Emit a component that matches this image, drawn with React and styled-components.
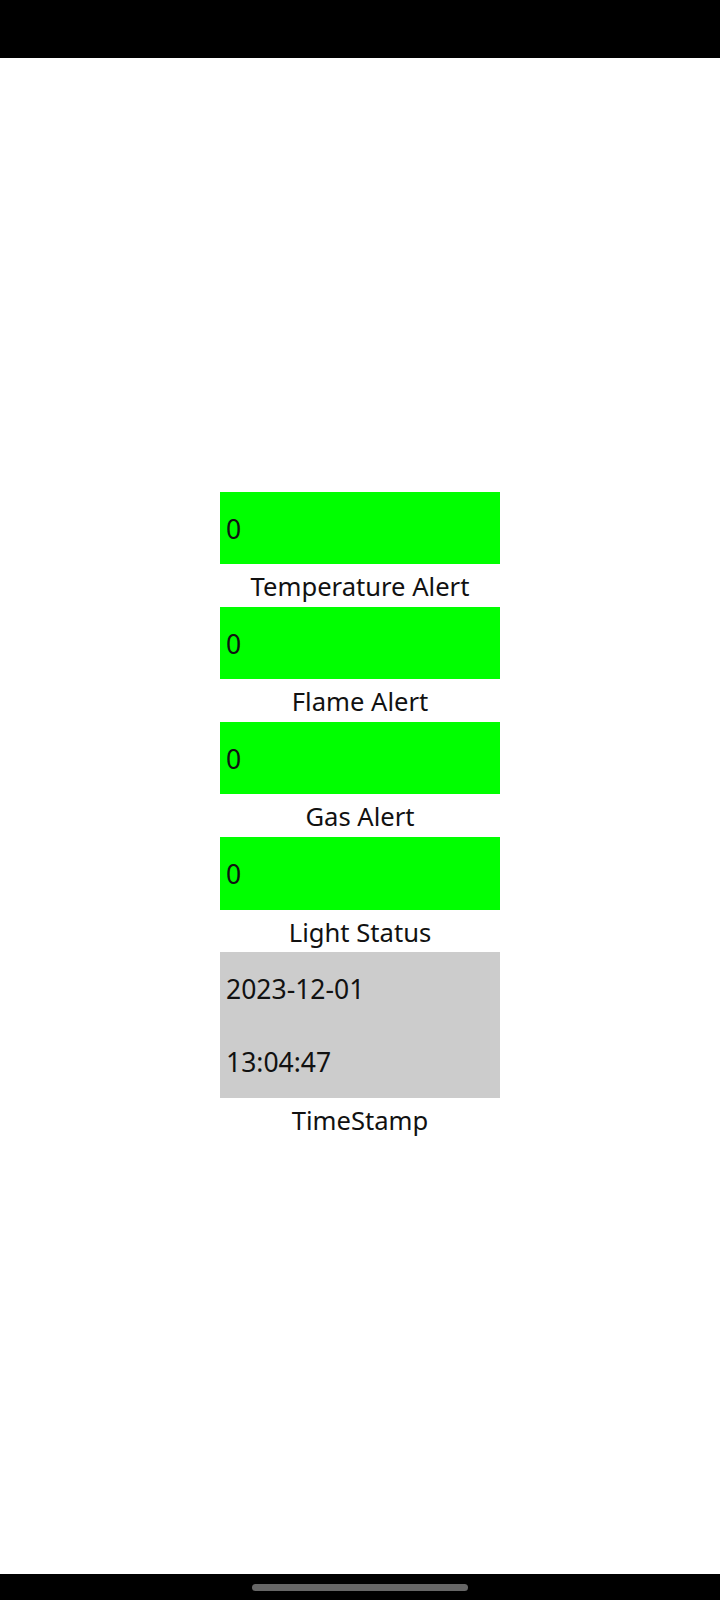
import React from "react";
import styled, { createGlobalStyle } from "styled-components";

const GlobalStyle = createGlobalStyle`
  html, body {
    margin: 0;
    padding: 0;
    background: #fff;
  }
  body {
    font-family: "Noto Sans", "Open Sans", sans-serif;
    color: #111;
  }
`;

const sensors = [
  { label: "Temperature Alert", value: "0" },
  { label: "Flame Alert", value: "0" },
  { label: "Gas Alert", value: "0" },
  { label: "Light Status", value: "0" },
];

const App = () => {
  return (
    <>
      <GlobalStyle />
      <Screen>
        <StatusBar />
        <Main>
          <Panel>
            {sensors.map((s) => (
              <Item key={s.label}>
                <ValueBox $bg="#00ff00">
                  <Line>{s.value}</Line>
                </ValueBox>
                <Label>{s.label}</Label>
              </Item>
            ))}
            <Item>
              <ValueBox $bg="#cccccc">
                <Line>2023-12-01</Line>
                <Line />
                <Line>13:04:47</Line>
              </ValueBox>
              <Label>TimeStamp</Label>
            </Item>
          </Panel>
        </Main>
        <NavBar>
          <Pill />
        </NavBar>
      </Screen>
    </>
  );
};

const Screen = styled.div`
  width: 720px;
  height: 1600px;
  display: flex;
  flex-direction: column;
`;

const StatusBar = styled.div`
  height: 58px;
  background: #000;
  flex-shrink: 0;
`;

const Main = styled.div`
  flex: 1;
  display: flex;
  align-items: center;
  justify-content: center;
`;

const Panel = styled.div`
  width: 280px;
  display: flex;
  flex-direction: column;
`;

const Item = styled.div`
  display: flex;
  flex-direction: column;
`;

const ValueBox = styled.div`
  background: ${(p) => p.$bg};
  padding: 19px 6px 17px;
`;

const Line = styled.div`
  height: 36.5px;
  line-height: 36.5px;
  font-size: 26.5px;
`;

const Label = styled.div`
  box-sizing: border-box;
  height: 42.7px;
  padding-top: 3px;
  line-height: 39.7px;
  text-align: center;
  font-size: 25.6px;
`;

const NavBar = styled.div`
  height: 26px;
  background: #000;
  flex-shrink: 0;
  display: flex;
  align-items: center;
  justify-content: center;
`;

const Pill = styled.div`
  width: 216px;
  height: 7px;
  border-radius: 4px;
  background: #666;
`;

export default App;
